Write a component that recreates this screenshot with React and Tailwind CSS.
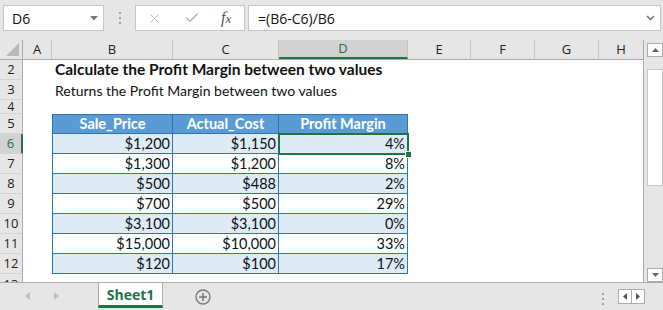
import { X, Check } from 'lucide-react';

const COLS = [
  { id: 'A', w: 'w-[29px]' },
  { id: 'B', w: 'w-[121px]' },
  { id: 'C', w: 'w-[106px]' },
  { id: 'D', w: 'w-[129px]', active: true },
  { id: 'E', w: 'w-[63px]' },
  { id: 'F', w: 'w-[64px]' },
  { id: 'G', w: 'w-[64px]' },
  { id: 'H', w: 'w-[45px]' },
];

const ROWS = [
  { n: 6, price: '$1,200', cost: '$1,150', margin: '4%' },
  { n: 7, price: '$1,300', cost: '$1,200', margin: '8%' },
  { n: 8, price: '$500', cost: '$488', margin: '2%' },
  { n: 9, price: '$700', cost: '$500', margin: '29%' },
  { n: 10, price: '$3,100', cost: '$3,100', margin: '0%' },
  { n: 11, price: '$15,000', cost: '$10,000', margin: '33%' },
  { n: 12, price: '$120', cost: '$100', margin: '17%' },
];

const ui = { fontFamily: '"Open Sans", "Noto Sans", sans-serif' };
const cell = { fontFamily: 'Lato, "Liberation Sans", sans-serif' };

const RowHead = ({ n, active, h = 'h-[20px]', size = 'text-[13px]' }) => (
  <div
    className={`w-[23px] ${h} shrink-0 flex items-center justify-center overflow-hidden border-b border-[#d4d4d4] ${size} leading-none ${
      active
        ? 'bg-[#d2d2d2] text-[#217346] border-r-2 border-r-[#217346]'
        : 'bg-[#e6e6e6] text-[#222] border-r border-r-[#ababab]'
    }`}
    style={ui}
  >
    {n}
  </div>
);

export default function App() {
  return (
    <div className="relative w-[663px] h-[310px] overflow-hidden bg-[#e6e6e6] text-[#111]">
      {/* formula bar */}
      <div className="h-[40px] flex items-start pt-[5px] pl-[3px]" style={ui}>
        <div className="w-[101px] h-[26px] bg-white border border-[#c6c6c6] flex items-center justify-between pl-[8px] pr-[5px] text-[14px]">
          <span>D6</span>
          <svg width="8" height="5" viewBox="0 0 8 5">
            <path d="M0 0h8L4 4.5z" fill="#777" />
          </svg>
        </div>
        <div className="w-[31px] h-[26px] flex flex-col items-center justify-center gap-[3px]">
          <span className="w-[2px] h-[2px] bg-[#a0a0a0]" />
          <span className="w-[2px] h-[2px] bg-[#a0a0a0]" />
          <span className="w-[2px] h-[2px] bg-[#a0a0a0]" />
        </div>
        <div className="w-[110px] h-[26px] bg-white border border-[#c6c6c6] flex items-center pl-[11px]">
          <X size={15} strokeWidth={1.4} color="#b0b0b0" />
          <Check size={16} strokeWidth={2} color="#b0b0b0" className="ml-[22px]" />
          <span
            className="ml-[21px] italic text-[16px] text-[#555]"
            style={{ fontFamily: '"Liberation Serif", serif' }}
          >
            f<span className="text-[13px]">x</span>
          </span>
        </div>
        <div className="ml-[3px] w-[413px] h-[26px] bg-white border border-[#c6c6c6] flex items-center justify-between pl-[9px] pr-[5px] text-[14px]">
          <span>=(B6-C6)/B6</span>
          <svg width="9" height="6" viewBox="0 0 9 6">
            <path d="M1 1l3.5 3.5L8 1" stroke="#777" strokeWidth="1.6" fill="none" />
          </svg>
        </div>
      </div>

      {/* sheet + scrollbar */}
      <div className="flex h-[242px]">
        <div className="w-[644px] h-full bg-white border-r border-[#ababab] overflow-hidden">
          {/* column headers */}
          <div className="flex h-[20px] bg-[#e6e6e6] border-b border-[#ababab]" style={ui}>
            <div className="w-[23px] h-full shrink-0 border-r border-[#ababab] flex items-end justify-end pr-[3px] pb-[3px]">
              <svg width="13" height="13" viewBox="0 0 13 13">
                <path d="M13 0V13H0z" fill="#b8b8b8" />
              </svg>
            </div>
            {COLS.map((c) => (
              <div
                key={c.id}
                className={`${c.w} h-full shrink-0 flex items-center justify-center text-[13px] ${
                  c.active
                    ? 'bg-[#d2d2d2] text-[#217346] border-b-2 border-[#217346] border-r border-r-[#c6c6c6]'
                    : 'text-[#222] border-r border-[#c6c6c6]'
                }`}
              >
                {c.id}
              </div>
            ))}
          </div>

          <div style={cell} className="text-[14.5px]">
            {/* row 2 */}
            <div className="flex h-[20px]">
              <RowHead n={2} />
              <div className="w-[29px] shrink-0" />
              <div className="pl-[3px] flex items-center font-bold text-[15.5px] whitespace-nowrap">
                Calculate the Profit Margin between two values
              </div>
            </div>
            {/* row 3 */}
            <div className="flex h-[20px]">
              <RowHead n={3} />
              <div className="w-[29px] shrink-0" />
              <div className="pl-[3px] flex items-center text-[14px] whitespace-nowrap">
                Returns the Profit Margin between two values
              </div>
            </div>
            {/* row 4 */}
            <div className="flex h-[14px]">
              <RowHead n={4} h="h-[14px]" size="text-[12px]" />
            </div>
            {/* row 5: table header */}
            <div className="flex h-[20px]">
              <RowHead n={5} />
              <div className="w-[29px] shrink-0" />
              <div className="w-[121px] h-full bg-[#5b9bd5] border border-[#2e75b6] text-white font-bold flex items-center justify-center">
                Sale_Price
              </div>
              <div className="w-[106px] h-full bg-[#5b9bd5] border-y border-r border-[#2e75b6] text-white font-bold flex items-center justify-center">
                Actual_Cost
              </div>
              <div className="w-[129px] h-full bg-[#5b9bd5] border-y border-r border-[#2e75b6] text-white font-bold flex items-center justify-center">
                Profit Margin
              </div>
            </div>
            {ROWS.map((r, i) => {
              const bg = i % 2 === 0 ? 'bg-[#ddebf7]' : 'bg-white';
              return (
                <div key={r.n} className="flex h-[20px]">
                  <RowHead n={r.n} active={r.n === 6} />
                  <div className="w-[29px] shrink-0" />
                  <div className={`w-[121px] h-full ${bg} border-x border-b border-[#2e75b6] flex items-center justify-end pr-[2px]`}>
                    {r.price}
                  </div>
                  <div className={`w-[106px] h-full ${bg} border-r border-b border-[#2e75b6] flex items-center justify-end pr-[2px]`}>
                    {r.cost}
                  </div>
                  <div className={`w-[129px] h-full ${bg} border-r border-b border-[#2e75b6] flex items-center justify-end pr-[2px]`}>
                    {r.margin}
                  </div>
                </div>
              );
            })}
            {/* row 13, cut off by the tab bar */}
            <div className="flex h-[8px]">
              <div
                className="w-[23px] h-[8px] shrink-0 bg-[#e6e6e6] border-r border-[#ababab] text-[13px] leading-[20px] text-center overflow-hidden text-[#222]"
                style={ui}
              >
                13
              </div>
            </div>
          </div>
        </div>

        {/* vertical scrollbar */}
        <div className="ml-[3px] w-[16px] h-full flex flex-col pt-[3px]">
          <div className="h-[14px] bg-white border border-[#ababab] flex items-center justify-center">
            <svg width="7" height="4" viewBox="0 0 7 4">
              <path d="M0 4L3.5 0 7 4z" fill="#666" />
            </svg>
          </div>
          <div className="mt-[12px] h-[117px] bg-white border border-[#c6c6c6]" />
          <div className="flex-1" />
          <div className="h-[14px] bg-white border border-[#ababab] flex items-center justify-center">
            <svg width="7" height="4" viewBox="0 0 7 4">
              <path d="M0 0h7L3.5 4z" fill="#666" />
            </svg>
          </div>
        </div>
      </div>

      {/* sheet tabs bar */}
      <div className="h-[28px] border-t border-[#ababab] flex items-start" style={ui}>
        <div className="w-[98px] h-[26px] flex items-center">
          <svg width="5" height="8" viewBox="0 0 5 8" className="ml-[25px]">
            <path d="M5 0v8L0 4z" fill="#c0c0c0" />
          </svg>
          <svg width="5" height="8" viewBox="0 0 5 8" className="ml-[24px]">
            <path d="M0 0v8l5-4z" fill="#c0c0c0" />
          </svg>
        </div>
        <div className="w-[65px] h-[25px] bg-white border-x border-[#ababab] border-b-[3px] border-b-[#217346] flex items-center justify-center font-bold text-[14px] text-[#217346]">
          Sheet1
        </div>
        <div className="ml-[32px] mt-[6px]">
          <svg width="16" height="16" viewBox="0 0 16 16">
            <circle cx="8" cy="8" r="7" stroke="#777" strokeWidth="1.3" fill="none" />
            <path d="M8 4v8M4 8h8" stroke="#777" strokeWidth="1.5" />
          </svg>
        </div>
        <div className="flex-1" />
        <div className="mt-[10px] flex flex-col gap-[3px] mr-[14px]">
          <span className="w-[2px] h-[2px] bg-[#a0a0a0]" />
          <span className="w-[2px] h-[2px] bg-[#a0a0a0]" />
          <span className="w-[2px] h-[2px] bg-[#a0a0a0]" />
        </div>
        <div className="mt-[6px] mr-[18px] w-[27px] h-[15px] bg-white border border-[#ababab] flex">
          <div className="flex-1 flex items-center justify-center border-r border-[#ababab]">
            <svg width="4" height="7" viewBox="0 0 4 7">
              <path d="M4 0v7L0 3.5z" fill="#555" />
            </svg>
          </div>
          <div className="flex-1 flex items-center justify-center">
            <svg width="4" height="7" viewBox="0 0 4 7">
              <path d="M0 0v7l4-3.5z" fill="#555" />
            </svg>
          </div>
        </div>
      </div>

      {/* active cell selection */}
      <div className="absolute left-[278px] top-[133px] w-[131px] h-[22px] border-2 border-[#217346] pointer-events-none" />
      <div className="absolute left-[405px] top-[151px] w-[7px] h-[7px] bg-[#217346] border border-white pointer-events-none" />
    </div>
  );
}
